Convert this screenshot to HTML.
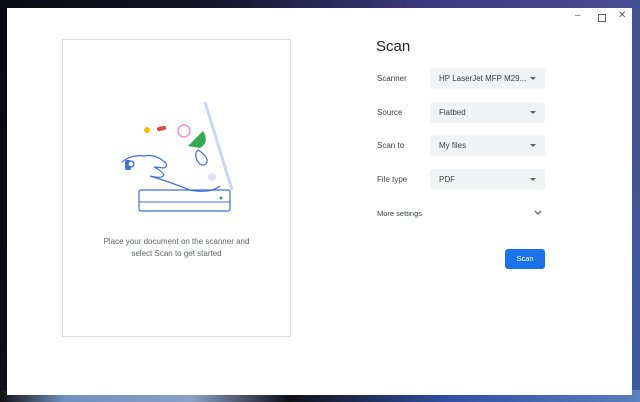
<!DOCTYPE html><html><head><style>
body{margin:0;width:640px;height:402px;overflow:hidden;position:relative;font-family:"Liberation Sans",sans-serif;
background:linear-gradient(100deg,#0a0a12 0%,#15152a 30%,#3a3a80 60%,#4a4a90 85%,#3a5a9a 100%);}
.bot{position:absolute;left:0;top:390px;width:640px;height:12px;background:linear-gradient(90deg,#111 0%,#7090c0 10%,#8aa0c8 30%,#101018 45%,#3050a0 70%,#5a80c0 100%);}
.win{position:absolute;left:7px;top:8px;width:625px;height:387px;background:#fff;}
.lp{position:absolute;left:55px;top:31px;width:229px;height:298px;border:1px solid #dadce0;box-sizing:border-box;}
.cap{position:absolute;left:55px;top:228px;width:229px;text-align:center;font-size:8px;color:#5f6368;line-height:12px;}
.t{position:absolute;left:369px;top:30px;font-size:15px;color:#202124;}
.l{position:absolute;left:370px;font-size:8px;color:#3c4043;}
.d{position:absolute;left:423px;width:115px;height:21px;background:#f1f3f4;border-radius:3px;font-size:8px;color:#3c4043;line-height:21px;box-sizing:border-box;padding-left:9px;}
.d:after{content:"";position:absolute;right:9px;top:9px;border:3px solid transparent;border-top:3px solid #5f6368;}
.btn{position:absolute;left:498px;top:241px;width:40px;height:20px;background:#1a73e8;border-radius:3px;color:#fff;font-size:7.5px;text-align:center;line-height:20px;}
.ctl{position:absolute;top:3px;font-size:10px;color:#5f6368;}
</style></head><body>
<div class="bot"></div>
<div class="win">
<span class="ctl" style="left:568px;top:2px">–</span>
<div style="position:absolute;left:591px;top:6px;width:6px;height:6px;border:1.3px solid #5f6368"></div>
<span class="ctl" style="left:611px;top:2px">✕</span>
<div class="lp"></div>
<svg style="position:absolute;left:93px;top:82px" width="140" height="130" viewBox="100 90 140 130">
<line x1="205" y1="102" x2="232" y2="190" stroke="#c9d6f5" stroke-width="3"/>
<circle cx="147" cy="130" r="3" fill="#fbbc04"/>
<line x1="159" y1="129" x2="164" y2="128" stroke="#ea4335" stroke-width="4" stroke-linecap="round"/>
<circle cx="184" cy="131" r="6" fill="none" stroke="#f08ee0" stroke-width="1.5"/>
<path d="M188 146 L203 131 Q210 142 200 148 Z" fill="#34a853"/>
<path d="M198 150 q-4 4 -1 10 q3 6 7 5 q5-2 2-8 q-3-4 -8-7z" fill="none" stroke="#3c6fd8" stroke-width="1.2"/>
<circle cx="212" cy="177" r="4" fill="#dde3f3"/>
<path d="M122 162 q10-8 22-6 q10-2 18 4 q8 5 2 8 l-10-1 q8 4 10 8 q-2 4 -14 1 q20 6 40 14 q20 4 30-4" fill="none" stroke="#3c6fd8" stroke-width="1.2"/>
<rect x="125" y="160" width="6" height="10" rx="2" fill="#3c6fd8"/>
<circle cx="131" cy="164" r="3" fill="#fff" stroke="#3c6fd8" stroke-width="1.3"/>
<rect x="139" y="190" width="91" height="21" rx="2" fill="none" stroke="#3c6fd8" stroke-width="1.2"/>
<line x1="139" y1="202" x2="230" y2="202" stroke="#3c6fd8" stroke-width="1"/>
<circle cx="221" cy="198" r="1.5" fill="#34a853"/>
</svg>
<div class="cap">Place your document on the scanner and<br>select Scan to get started</div>
<div class="t">Scan</div>
<div class="l" style="top:66px">Scanner</div><div class="d" style="top:60px">HP LaserJet MFP M29...</div>
<div class="l" style="top:100px">Source</div><div class="d" style="top:94px">Flatbed</div>
<div class="l" style="top:133px">Scan to</div><div class="d" style="top:127px">My files</div>
<div class="l" style="top:167px">File type</div><div class="d" style="top:161px">PDF</div>
<div class="l" style="top:201px;font-size:7.5px">More settings</div>
<svg style="position:absolute;left:527px;top:202px" width="8" height="6"><path d="M1 1 L4 4 L7 1" fill="none" stroke="#5f6368" stroke-width="1.3"/></svg>
<div class="btn">Scan</div>
</div>
</body></html>
